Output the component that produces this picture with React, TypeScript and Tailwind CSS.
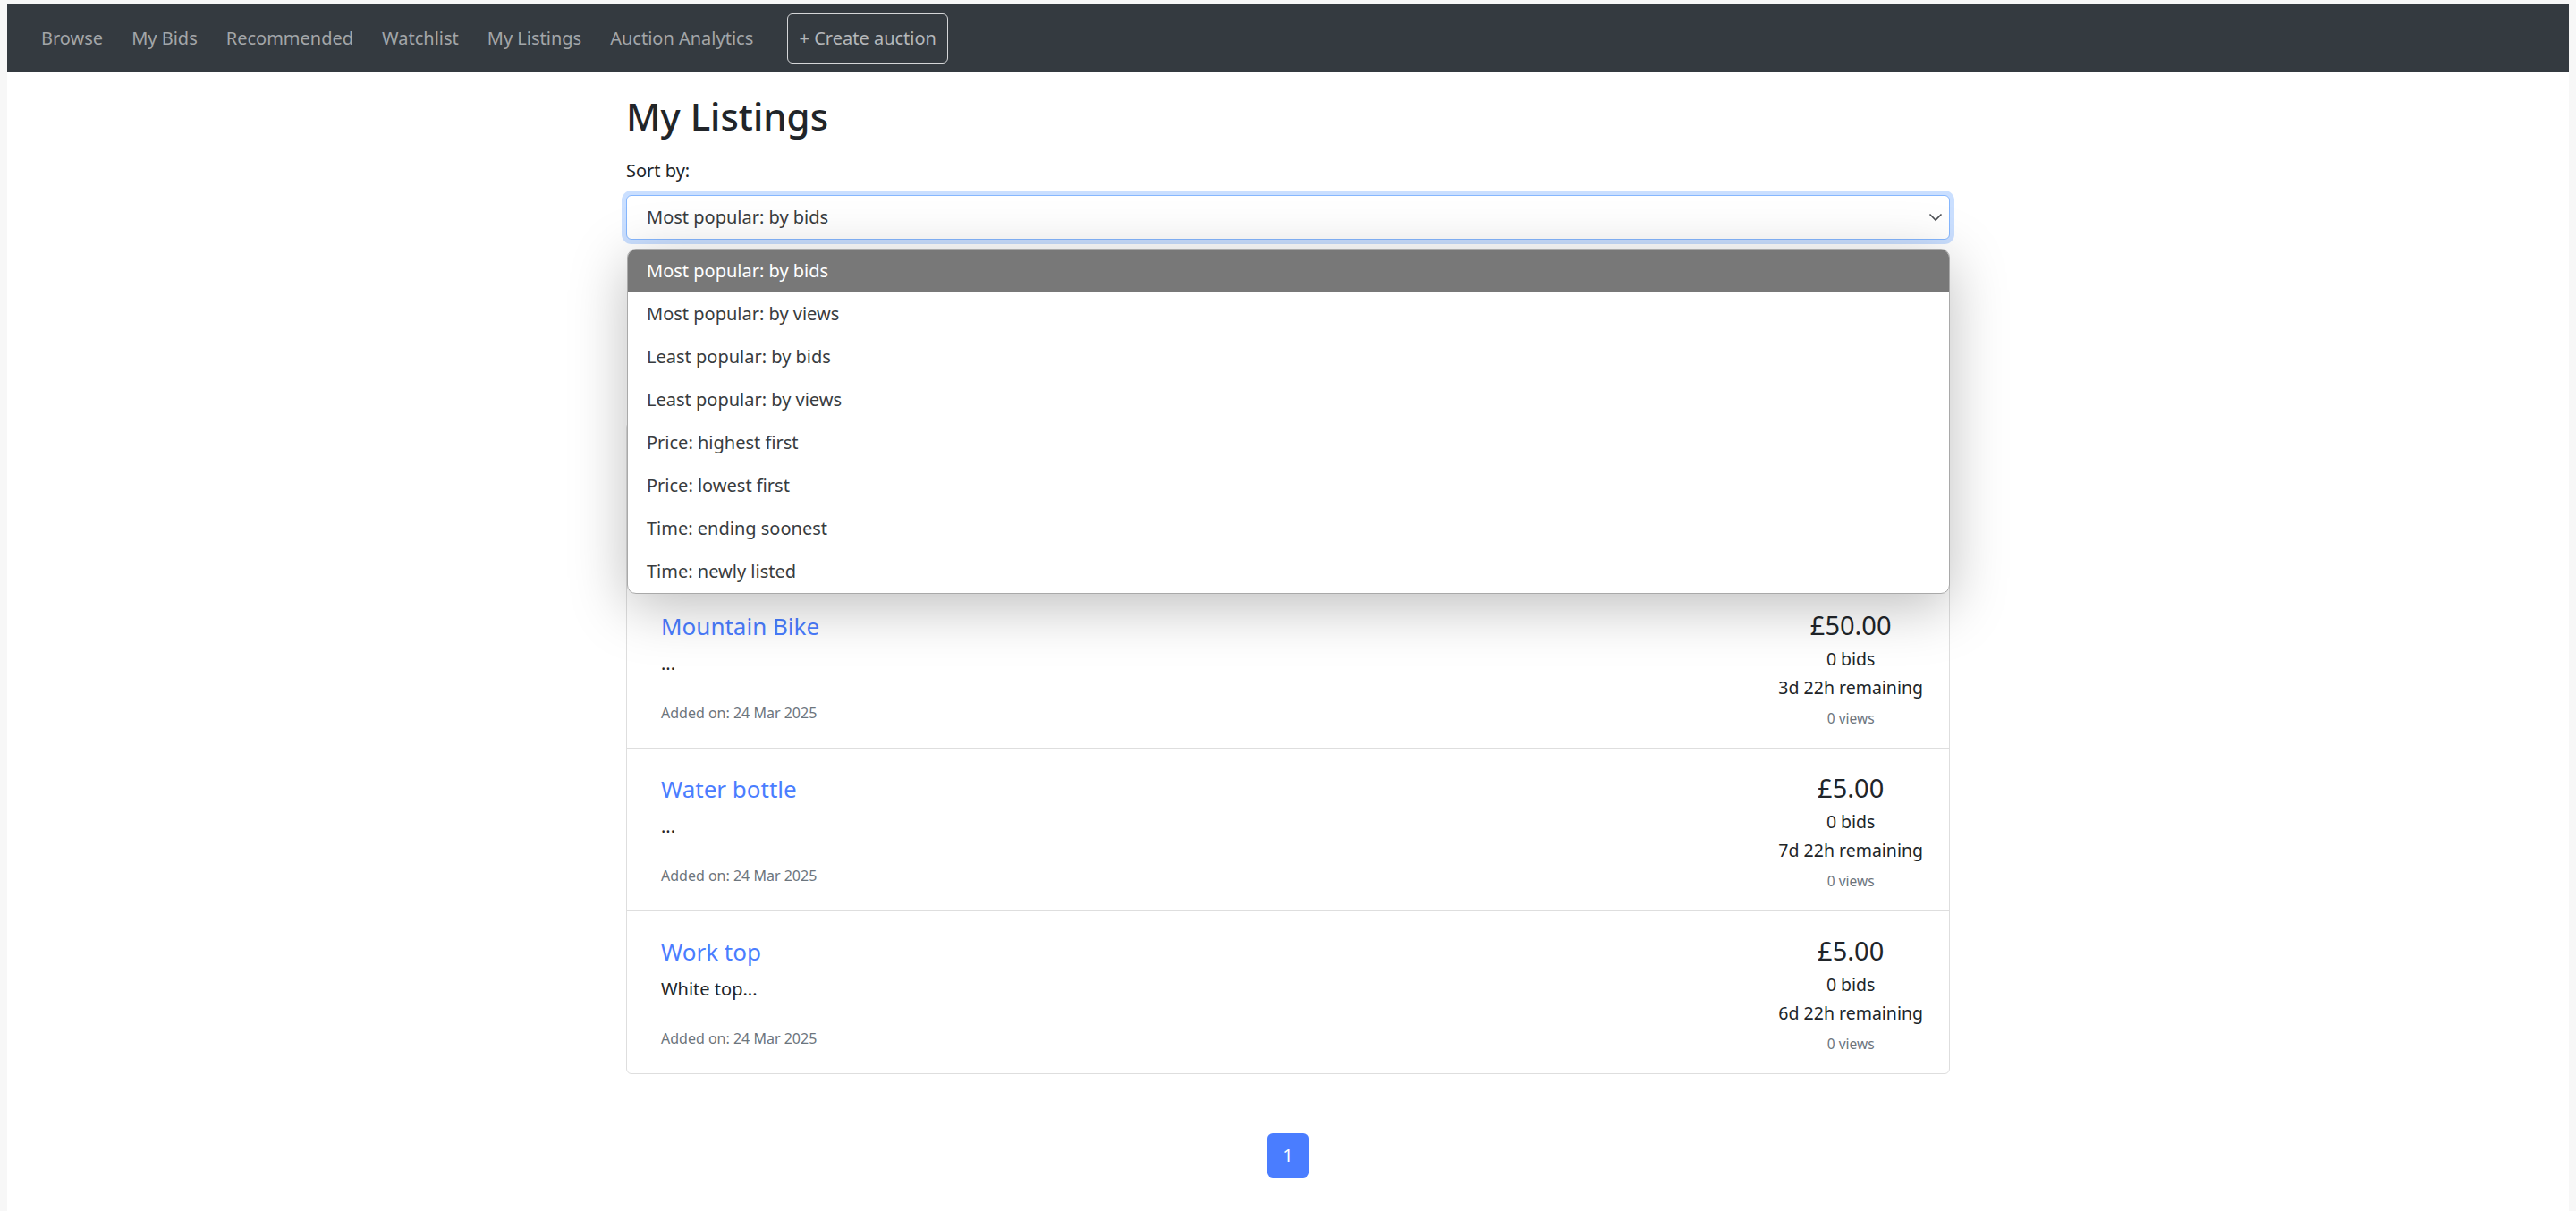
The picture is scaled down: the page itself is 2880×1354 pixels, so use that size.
import React from "react";

const navLinks = ["Browse", "My Bids", "Recommended", "Watchlist", "My Listings", "Auction Analytics"];

const sortOptions = [
  "Most popular: by bids",
  "Most popular: by views",
  "Least popular: by bids",
  "Least popular: by views",
  "Price: highest first",
  "Price: lowest first",
  "Time: ending soonest",
  "Time: newly listed",
];

const listings = [
  { title: "Mountain Bike", desc: "...", added: "24 Mar 2025", price: "£50.00", bids: 0, remaining: "3d 22h remaining", views: 0 },
  { title: "Water bottle", desc: "...", added: "24 Mar 2025", price: "£5.00", bids: 0, remaining: "7d 22h remaining", views: 0 },
  { title: "Work top", desc: "White top...", added: "24 Mar 2025", price: "£5.00", bids: 0, remaining: "6d 22h remaining", views: 0 },
];

function Navbar() {
  return (
    <nav className="flex h-[76px] items-center bg-[#343a40] pl-[22px]">
      {navLinks.map((name) => (
        <a key={name} href="#" className="px-[16px] text-[20px] text-[#a3a6a9] whitespace-nowrap">
          {name}
        </a>
      ))}
      <button className="ml-[22px] flex h-[56px] w-[180px] items-center justify-center rounded-[6px] border border-[#d5d6d8] text-[20px] text-[#b5b7ba] whitespace-nowrap">
        + Create auction
      </button>
    </nav>
  );
}

function SortSelect() {
  return (
    <div className="relative">
      <div className="flex h-[50px] items-center justify-between rounded-[6px] border border-[#86b7fe] bg-white pl-[22px] pr-[7px] shadow-[0_0_0_5px_rgba(13,110,253,0.22)]">
        <span className="text-[20px] text-[#383c40]">Most popular: by bids</span>
        <svg width="16" height="10" viewBox="0 0 16 10" fill="none">
          <polyline points="1.5,1.5 8,8 14.5,1.5" stroke="#4a4d52" strokeWidth="1.6" />
        </svg>
      </div>

      {/* open native list */}
      <div className="absolute left-[1px] right-0 top-[60px] z-20 overflow-hidden rounded-[10px] border border-[#a9a9a9] bg-white shadow-[0_14px_64px_rgba(0,0,0,0.26)]">
        {sortOptions.map((opt, i) => (
          <div
            key={opt}
            className={
              i === 0
                ? "flex h-[48px] items-center bg-[#787878] pl-[21px] text-[20px] text-white"
                : "flex h-[48px] items-center pl-[21px] text-[20px] text-[#383c40]"
            }
          >
            {opt}
          </div>
        ))}
      </div>
    </div>
  );
}

function ListingRow({ item }: { item: (typeof listings)[number] }) {
  return (
    <div className="flex h-[182px] justify-between border-t border-[#dedede] pl-[38px] pr-[29px] pt-[28px]">
      <div className="flex flex-col">
        <a href="#" className="text-[26px] leading-[34px] text-[#4a7dff]">
          {item.title}
        </a>
        <p className="mt-[10px] text-[20px] leading-[30px] text-[#212529]">{item.desc}</p>
        <p className="mt-[28px] text-[16px] leading-[24px] text-[#6c757d]">Added on: {item.added}</p>
      </div>
      <div className="flex flex-col items-center text-center">
        <span className="text-[29px] leading-[32px] text-[#212529]">{item.price}</span>
        <span className="mt-[8px] text-[19.5px] leading-[28px] text-[#212529]">{item.bids} bids</span>
        <span className="mt-[4px] text-[19.5px] leading-[28px] text-[#212529]">{item.remaining}</span>
        <span className="mt-[8px] text-[15.5px] leading-[24px] text-[#6c757d]">{item.views} views</span>
      </div>
    </div>
  );
}

export default function App() {
  return (
    <div className="min-h-screen bg-[#f7f7f7] px-[8px] pt-[5px] font-['Noto_Sans',sans-serif]">
      <div className="min-h-[1349px] bg-white">
        <Navbar />

        <main className="mx-auto w-[1480px] pb-[40px]">
          <h2 className="mt-[24px] text-[42px] font-medium leading-[50px] text-[#212529]">My Listings</h2>
          <label className="mt-[21px] block text-[20px] leading-[30px] text-[#212529]">Sort by:</label>
          <div className="mt-[12px]">
            <SortSelect />
          </div>

          <div className="mt-[204px] overflow-hidden rounded-[6px] border border-[#dedede] bg-white">
            {/* row hidden under the open list */}
            <div className="h-[181px]" />
            {listings.map((item) => (
              <ListingRow key={item.title} item={item} />
            ))}
          </div>

          <div className="mt-[66px] flex justify-center">
            <a href="#" className="flex h-[50px] w-[46px] items-center justify-center rounded-[6px] bg-[#4a7dff] text-[20px] text-white">
              1
            </a>
          </div>
        </main>
      </div>
    </div>
  );
}
